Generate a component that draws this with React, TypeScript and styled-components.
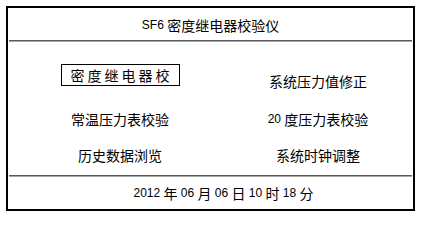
import React from 'react';
import styled, { createGlobalStyle } from 'styled-components';

const GlobalStyle = createGlobalStyle`
    html, body {
        margin: 0;
        padding: 0;
        background: #ffffff;
    }
    body {
        font-family: "Noto Sans CJK SC", "Liberation Sans", sans-serif;
        color: #000;
    }
`;

const Frame = styled.div`
    box-sizing: border-box;
    margin: 6px 0 0 6px;
    width: 409px;
    height: 205px;
    border: 2px solid #000;
    display: flex;
    flex-direction: column;
`;

const Header = styled.div`
    height: 32px;
    display: flex;
    align-items: center;
    justify-content: center;
    font-size: 14px;
    padding-top: 2px;
    box-sizing: border-box;
    white-space: pre;
`;

const Divider = styled.div`
    margin: 0 1px;
    height: 1px;
    background: #5a5a5a;
    border-bottom: 1px solid #a8a8a8;
`;

const Menu = styled.div`
    flex: 1;
    display: grid;
    grid-template-columns: 198px 198px;
    grid-template-rows: 38px 38px 34px;
    padding: 20px 0 0 13px;
    box-sizing: border-box;
`;

const MenuItem = styled.div<{ $selected?: boolean }>`
    display: flex;
    align-items: center;
    justify-content: center;
    font-size: 14px;
    line-height: 20px;
    white-space: pre;
    justify-self: center;
    align-self: ${p => (p.$selected ? 'start' : 'center')};
    margin-top: ${p => (p.$selected ? '2px' : '0')};
    padding: ${p => (p.$selected ? '0 6px 0 9px' : '0')};
    border: ${p => (p.$selected ? '1px solid #000' : 'none')};
    letter-spacing: ${p => (p.$selected ? '3px' : '0')};
`;

const Lat = styled.span`
    font-family: "Liberation Sans", sans-serif;
    font-size: 12px;
    white-space: pre;
`;

const Footer = styled.div`
    height: 32px;
    display: flex;
    align-items: center;
    justify-content: center;
    padding-left: 26px;
    font-size: 14px;
    white-space: pre;
`;

const items: { label: React.ReactNode; selected?: boolean }[] = [
    { label: '密度继电器校', selected: true },
    { label: '系统压力值修正' },
    { label: '常温压力表校验' },
    { label: <><Lat>20 </Lat>度压力表校验</> },
    { label: '历史数据浏览' },
    { label: '系统时钟调整' },
];

const App = () => {
    return (
        <>
            <GlobalStyle />
            <Frame>
                <Header>
                    <Lat>SF6 </Lat>密度继电器校验仪
                </Header>
                <Divider />
                <Menu>
                    {items.map((item, i) => (
                        <MenuItem key={i} $selected={item.selected}>{item.label}</MenuItem>
                    ))}
                </Menu>
                <Divider />
                <Footer>
                    <Lat>2012 </Lat>年<Lat> 06 </Lat>月<Lat> 06 </Lat>日<Lat> 10 </Lat>时<Lat> 18 </Lat>分
                </Footer>
            </Frame>
        </>
    );
};

export default App;
